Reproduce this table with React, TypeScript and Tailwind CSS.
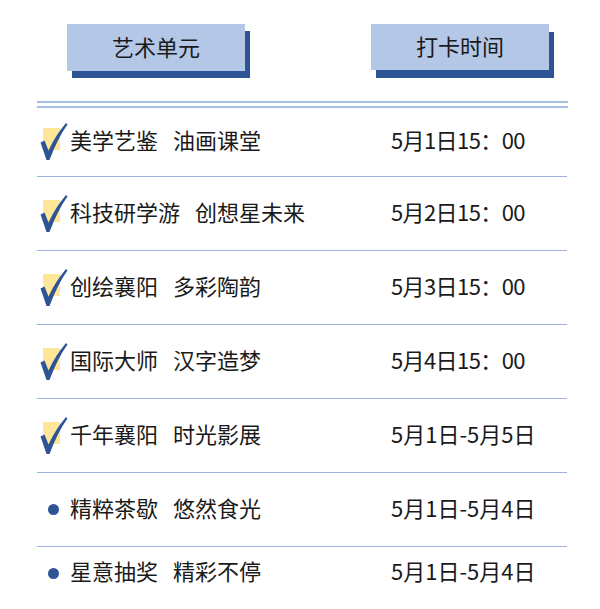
const rows = [
  { a: "美学艺鉴", b: "油画课堂", time: "5月1日15：00", done: true },
  { a: "科技研学游", b: "创想星未来", time: "5月2日15：00", done: true },
  { a: "创绘襄阳", b: "多彩陶韵", time: "5月3日15：00", done: true },
  { a: "国际大师", b: "汉字造梦", time: "5月4日15：00", done: true },
  { a: "千年襄阳", b: "时光影展", time: "5月1日-5月5日", done: true },
  { a: "精粹茶歇", b: "悠然食光", time: "5月1日-5月4日", done: false },
  { a: "星意抽奖", b: "精彩不停", time: "5月1日-5月4日", done: false },
];

function Check() {
  return (
    <svg width="30" height="44" viewBox="0 0 30 44" className="shrink-0">
      <rect x="5" y="8" width="17" height="22" fill="#ffe699" />
      <path d="M2.5 22.5 L6.5 20.5 L10.5 30.5 Q17 16 28 3 L29.5 4.5 Q20 17.5 11.5 40 L8.5 40 Z" fill="#2f5496" />
    </svg>
  );
}

function Dot() {
  return (
    <div className="w-[30px] h-[44px] shrink-0 flex items-center">
      <span className="ml-[10px] w-[11px] h-[11px] rounded-full bg-[#2f5496]" />
    </div>
  );
}

export default function App() {
  return (
    <div
      className="w-[600px] h-[609px] bg-white overflow-hidden text-[#1a1a1a]"
      style={{ fontFamily: '"Noto Sans CJK SC", "Noto Sans", sans-serif' }}
    >
      <div className="pl-[37px] w-[568px]">
        <div className="flex pt-[24px] h-[101px]">
          <div className="ml-[30px] w-[178px] h-[47px] pb-[3px] bg-[#b4c7e7] shadow-[5px_7px_0_#2f5496] flex items-center justify-center text-[22px]">
            艺术单元
          </div>
          <div className="ml-[126px] w-[178px] h-[46px] pb-[3px] bg-[#b4c7e7] shadow-[5px_8px_0_#2f5496] flex items-center justify-center text-[22px]">
            打卡时间
          </div>
        </div>
        <div className="h-[7px] border-t-2 border-b-2 border-[#a9bde3]" />
        <div className="w-[530px]">
          {rows.map((r, i) => {
            const last = i === rows.length - 1;
            const h = i === 0 ? "h-[69px]" : last ? "h-[52px]" : "h-[74px]";
            const colon = r.time.includes("：");
            return (
              <div
                key={i}
                className={`flex items-center ${h} ${last ? "" : "border-b border-[#9db3de]"}`}
              >
                <div className="w-[354px] flex items-center pl-[1px]">
                  {r.done ? <Check /> : <Dot />}
                  <span className="ml-[2px] mb-[6px] text-[22px] leading-none whitespace-nowrap">
                    {r.a}
                    <span className="ml-[15px]">{r.b}</span>
                  </span>
                </div>
                <span
                  className={`mb-[6px] text-[22px] leading-none whitespace-nowrap ${colon ? "tracking-[-0.6px]" : ""}`}
                >
                  {r.time}
                </span>
              </div>
            );
          })}
        </div>
      </div>
    </div>
  );
}
